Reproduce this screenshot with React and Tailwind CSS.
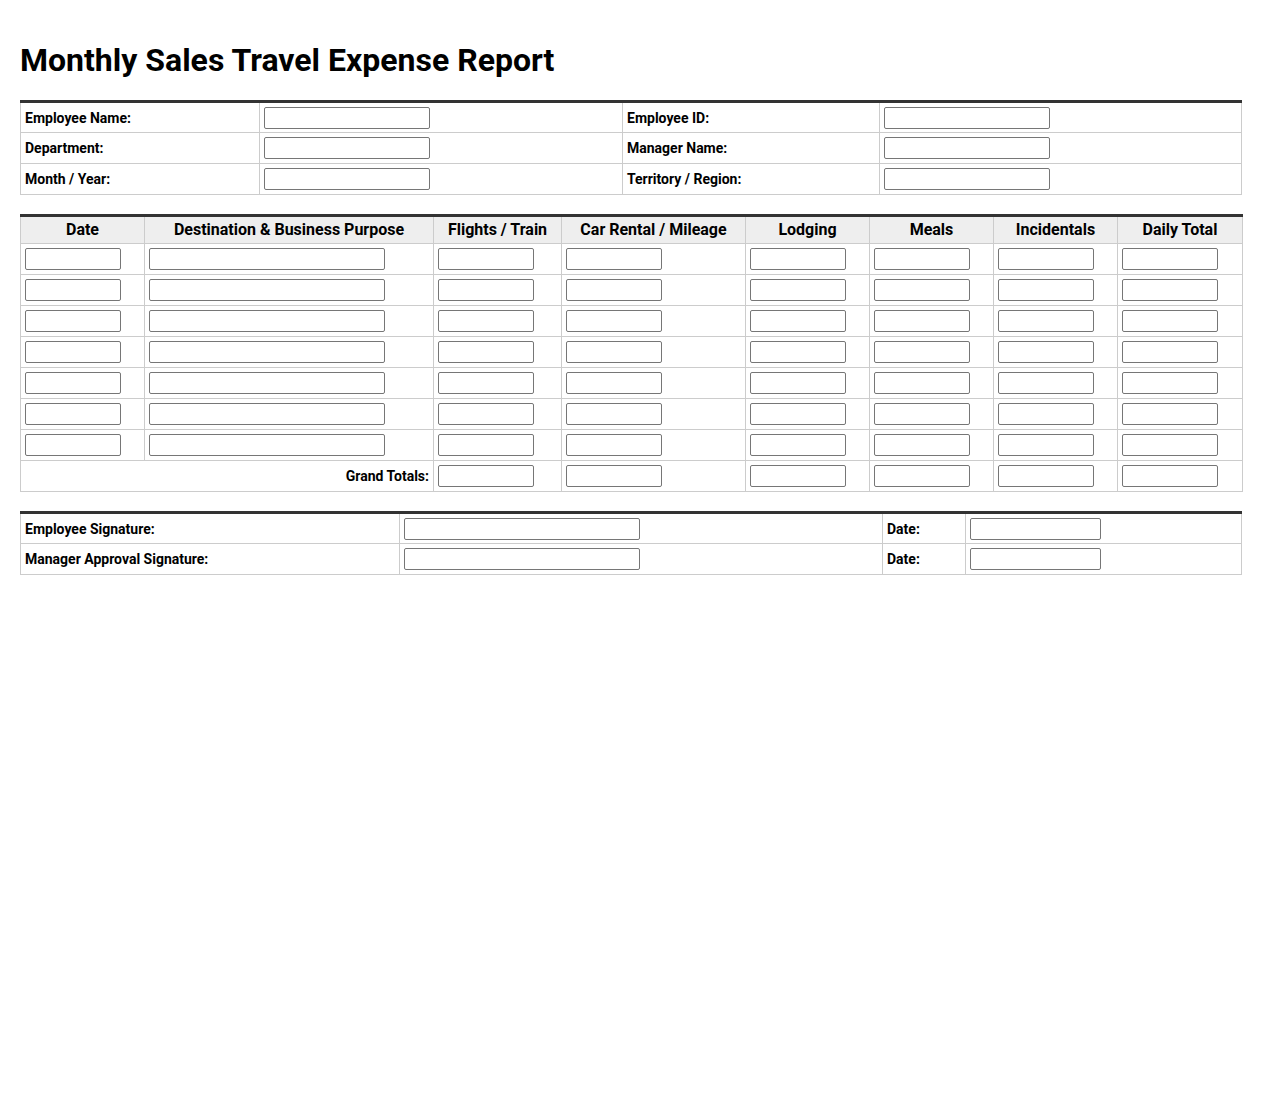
const inp = "h-[22px] rounded-[2px] border border-[#767676] bg-white align-middle";
const td = "border border-[#ccc] px-1 h-[31px] align-middle";

function Field({ w = "w-[166px]" }) {
  return <input className={`${inp} ${w}`} />;
}

export default function App() {
  const cols = ["Date", "Destination & Business Purpose", "Flights / Train", "Car Rental / Mileage", "Lodging", "Meals", "Incidentals", "Daily Total"];
  const widths = ["w-[124px]", "w-[289px]", "w-[128px]", "w-[184px]", "w-[124px]", "w-[124px]", "w-[124px]", "w-[125px]"];
  const rows = Array.from({ length: 7 });
  return (
    <div className="p-5 text-black text-sm" style={{ fontFamily: "Roboto, 'Liberation Sans', sans-serif" }}>
      <h1 className="text-[32px] font-bold leading-[38px] my-[21px]">Monthly Sales Travel Expense Report</h1>

      <table className="w-full border-collapse border-t-[3px] border-t-[#333] table-fixed">
        <colgroup>
          <col className="w-[239px]" /><col className="w-[363px]" /><col className="w-[257px]" /><col />
        </colgroup>
        <tbody>
          {[["Employee Name:", "Employee ID:"], ["Department:", "Manager Name:"], ["Month / Year:", "Territory / Region:"]].map(([a, b]) => (
            <tr key={a}>
              <td className={`${td} font-bold`}>{a}</td>
              <td className={td}><Field /></td>
              <td className={`${td} font-bold`}>{b}</td>
              <td className={td}><Field /></td>
            </tr>
          ))}
        </tbody>
      </table>

      <table className="w-full border-collapse border-t-[3px] border-t-[#333] table-fixed mt-[19px]">
        <colgroup>
          {widths.map((w, i) => <col key={i} className={w} />)}
        </colgroup>
        <thead>
          <tr>
            {cols.map((c) => (
              <th key={c} className="border border-[#ccc] bg-[#eee] h-[28px] px-1 text-base font-bold text-center">{c}</th>
            ))}
          </tr>
        </thead>
        <tbody>
          {rows.map((_, r) => (
            <tr key={r}>
              {cols.map((c, i) => (
                <td key={c} className={td}><Field w={i === 1 ? "w-[236px]" : "w-[96px]"} /></td>
              ))}
            </tr>
          ))}
          <tr>
            <td colSpan={2} className={`${td} text-right font-bold`}>Grand Totals:</td>
            {cols.slice(2).map((c) => (
              <td key={c} className={td}><Field w="w-[96px]" /></td>
            ))}
          </tr>
        </tbody>
      </table>

      <table className="w-full border-collapse border-t-[3px] border-t-[#333] table-fixed mt-[19px]">
        <colgroup>
          <col className="w-[379px]" /><col className="w-[483px]" /><col className="w-[83px]" /><col />
        </colgroup>
        <tbody>
          {["Employee Signature:", "Manager Approval Signature:"].map((a) => (
            <tr key={a}>
              <td className={`${td} font-bold`}>{a}</td>
              <td className={td}><Field w="w-[236px]" /></td>
              <td className={`${td} font-bold`}>Date:</td>
              <td className={td}><Field w="w-[131px]" /></td>
            </tr>
          ))}
        </tbody>
      </table>
    </div>
  );
}
